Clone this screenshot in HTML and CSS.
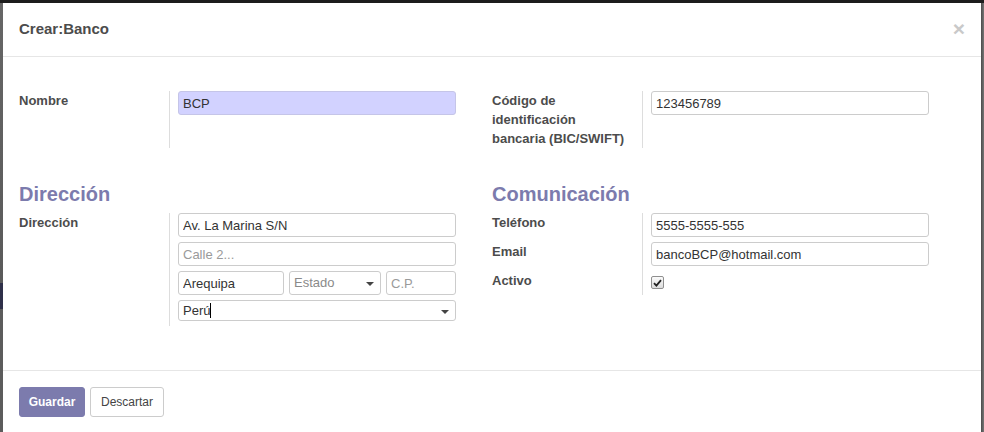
FILE: index.html
```html
<!DOCTYPE html>
<html lang="es">
<head>
<meta charset="utf-8">
<title>Crear:Banco</title>
<link rel="stylesheet" href="styles.css">
</head>
<body>
<div class="topbar"></div>
<div class="stage">
  <div class="side side-left"></div>
  <div class="modal">
    <header class="modal-header">
      <h4 class="modal-title">Crear:Banco</h4>
      <span class="close">×</span>
    </header>
    <main class="modal-body">
      <div class="cols top">
        <div class="group group-fill">
          <div class="lbl">Nombre</div>
          <div class="val"><input class="field required" type="text" value="BCP"></div>
        </div>
        <div class="group group-fill">
          <div class="lbl">Código de identificación bancaria (BIC/SWIFT)</div>
          <div class="val"><input class="field" type="text" value="123456789"></div>
        </div>
      </div>
      <div class="cols second">
        <div class="col">
          <h2 class="sep">Dirección</h2>
          <div class="group">
            <div class="lbl">Dirección</div>
            <div class="val addr">
              <input class="field" type="text" value="Av. La Marina S/N">
              <input class="field" type="text" placeholder="Calle 2...">
              <div class="addr-row">
                <input class="field city" type="text" value="Arequipa">
                <div class="field select state"><span class="ph">Estado</span><span class="caret"></span></div>
                <input class="field zip" type="text" placeholder="C.P.">
              </div>
              <div class="field select country"><span>Perú<span class="cursor"></span></span><span class="caret"></span></div>
            </div>
          </div>
        </div>
        <div class="col">
          <h2 class="sep">Comunicación</h2>
          <div class="group">
            <div class="lbl">Teléfono</div>
            <div class="val"><input class="field" type="text" value="5555-5555-555"></div>
            <div class="lbl">Email</div>
            <div class="val"><input class="field" type="text" value="bancoBCP@hotmail.com"></div>
            <div class="lbl">Activo</div>
            <div class="val"><span class="check"><svg width="9" height="8" viewBox="0 0 9 8"><path d="M1 4.2 L3.4 6.6 L8 1.2" fill="none" stroke="#222" stroke-width="1.8"/></svg></span></div>
          </div>
        </div>
      </div>
    </main>
    <footer class="modal-footer">
      <button class="btn btn-primary" type="button">Guardar</button>
      <button class="btn btn-secondary" type="button">Descartar</button>
    </footer>
  </div>
  <div class="side side-right"></div>
</div>
</body>
</html>
```
FILE: styles.css
```css
* { box-sizing: border-box; }
html, body { margin: 0; height: 432px; }
body {
  display: flex;
  flex-direction: column;
  font-family: "Liberation Sans", Arial, sans-serif;
  font-size: 13px;
  line-height: 1.5;
  color: #4c4c4c;
  background: #5f5f5f;
  overflow: hidden;
}
.topbar { height: 3px; background: #1d1d1d; flex: none; }
.stage { flex: 1; display: flex; min-height: 0; }
.side { width: 3px; flex: none; }
.side-left {
  background: linear-gradient(to bottom, #666 0, #5a5a5a 280px, #2f3049 280px, #2f3049 306px, #5c5c5c 306px, #5c5c5c 100%);
}
.side-right { background: linear-gradient(to right, #4a4a4a, #777); }
.modal {
  flex: 1;
  background: #fff;
  display: flex;
  flex-direction: column;
}
.modal-header {
  height: 54px;
  flex: none;
  display: flex;
  align-items: center;
  justify-content: space-between;
  padding: 0 16px;
  border-bottom: 1px solid #e6e6e6;
}
.modal-title {
  margin: 0;
  font-size: 15px;
  font-weight: bold;
  color: #4c4c4c;
}
.close {
  font-size: 21px;
  font-weight: bold;
  color: #c9c9c9;
  line-height: 1;
  margin-top: -3px;
}
.modal-body {
  flex: 1;
  padding: 34px 16px 0;
}
.cols {
  display: grid;
  grid-template-columns: 1fr 1fr;
}
.second { margin-top: 34px; }
.group {
  display: grid;
  grid-template-columns: 151px 1fr;
  align-content: start;
}
.group-fill { height: 100%; grid-template-rows: 1fr; }
.lbl {
  font-weight: bold;
  color: #4c4c4c;
  line-height: 19px;
  padding-right: 12px;
  border-right: 1px solid #ddd;
  padding-bottom: 5px;
}
.val {
  padding: 0 36px 5px 8px;
}
.top .lbl, .top .val { padding-bottom: 0; }
.sep {
  margin: 0 0 7px;
  font-size: 20px;
  line-height: 24px;
  font-weight: bold;
  color: #7c7bad;
}
.field {
  display: block;
  width: 100%;
  height: 24px;
  margin: 0;
  padding: 0 4px;
  border: 1px solid #ccc;
  border-radius: 3px;
  background: #fff;
  font-family: inherit;
  font-size: 13px;
  color: #333;
  outline: none;
}
.field::placeholder { color: #9a9a9a; }
.field.required { background: #d2d2ff; border-color: #c5c5e8; }
.addr { display: flex; flex-direction: column; gap: 5px; }
.addr-row { display: flex; gap: 5px; }
.city { width: 106px; flex: none; }
.state { width: 92px; flex: none; }
.zip { width: 70px; flex: none; }
.select {
  display: flex;
  align-items: center;
  justify-content: space-between;
  padding-right: 6px;
}
.country { height: 21px; }
.ph { color: #8a8a8a; }
.caret {
  width: 0;
  height: 0;
  border-left: 4px solid transparent;
  border-right: 4px solid transparent;
  border-top: 4px solid #444;
  margin-top: 2px;
}
.cursor {
  display: inline-block;
  width: 1px;
  height: 15px;
  background: #000;
  vertical-align: -3px;
}
.check {
  display: flex;
  align-items: center;
  justify-content: center;
  width: 13px;
  height: 13px;
  margin-top: 5px;
  border: 1px solid #8f8f8f;
  border-radius: 2px;
  background: linear-gradient(#fbfbfb, #dcdcdc);
}
.modal-footer {
  flex: none;
  height: 62px;
  border-top: 1px solid #e6e6e6;
  padding: 16px 16px 0;
  display: flex;
  align-items: flex-start;
  gap: 5px;
}
.btn {
  height: 30px;
  margin: 0;
  border-radius: 3px;
  font-family: inherit;
  font-size: 12px;
  cursor: pointer;
}
.btn-primary {
  width: 66px;
  background: #7c7bad;
  border: 1px solid #7c7bad;
  color: #fff;
  font-weight: bold;
}
.btn-secondary {
  width: 74px;
  background: #fff;
  border: 1px solid #ccc;
  color: #444;
}
```
